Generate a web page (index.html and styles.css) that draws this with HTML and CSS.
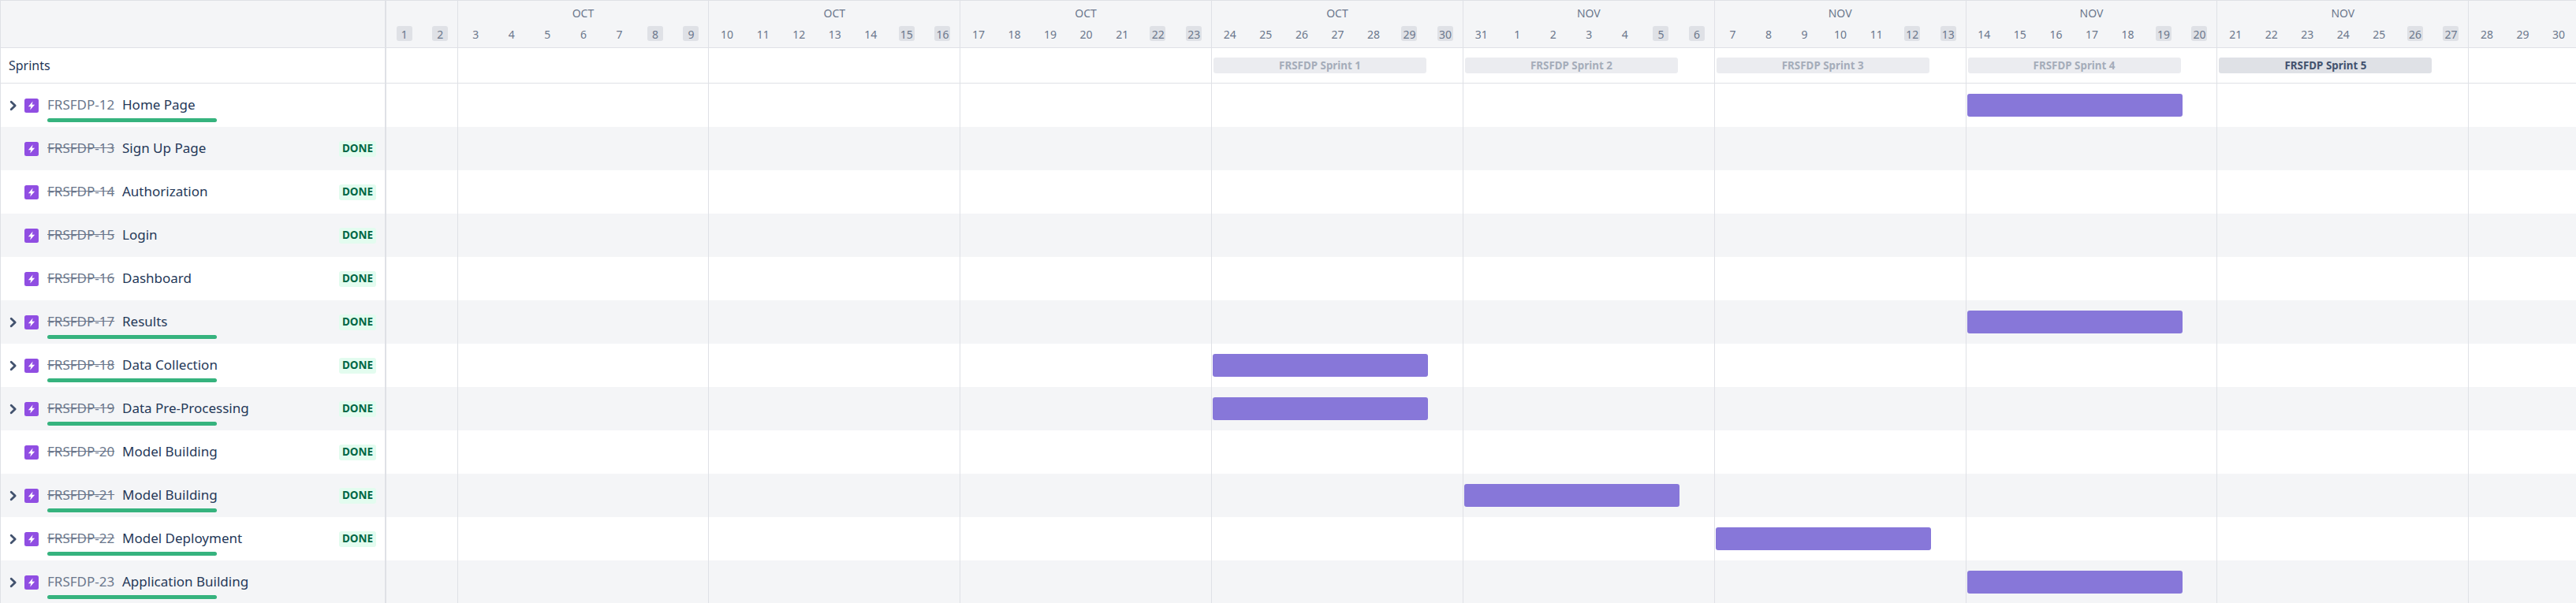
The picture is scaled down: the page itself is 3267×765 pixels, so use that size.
FILE: index.html
```html
<!DOCTYPE html>
<html lang="en">
<head>
<meta charset="utf-8">
<title>Roadmap</title>
<link rel="stylesheet" href="styles.css">
</head>
<body>
<svg class="defs" width="0" height="0" aria-hidden="true">
  <symbol id="epic" viewBox="0 0 18 18">
    <rect width="18" height="18" rx="2.5" fill="#904ee2"/>
    <path d="M10.6 3.4 4.9 10.2h3.3L7.2 14.6l5.9-6.9H9.6z" fill="#fff"/>
  </symbol>
  <symbol id="chev" viewBox="0 0 10 14">
    <path d="M2.2 2.2 7.2 7l-5 4.8" fill="none" stroke="#42526e" stroke-width="2.8" stroke-linecap="round" stroke-linejoin="round"/>
  </symbol>
</svg>
<main class="board">
  <header class="row head">
    <div class="side"></div>
    <div class="weeks">
      <div class="wk"><div class="mon"></div><div class="days"><span class="off">1</span><span class="off">2</span></div></div>
      <div class="wk"><div class="mon">OCT</div><div class="days"><span>3</span><span>4</span><span>5</span><span>6</span><span>7</span><span class="off">8</span><span class="off">9</span></div></div>
      <div class="wk"><div class="mon">OCT</div><div class="days"><span>10</span><span>11</span><span>12</span><span>13</span><span>14</span><span class="off">15</span><span class="off">16</span></div></div>
      <div class="wk"><div class="mon">OCT</div><div class="days"><span>17</span><span>18</span><span>19</span><span>20</span><span>21</span><span class="off">22</span><span class="off">23</span></div></div>
      <div class="wk"><div class="mon">OCT</div><div class="days"><span>24</span><span>25</span><span>26</span><span>27</span><span>28</span><span class="off">29</span><span class="off">30</span></div></div>
      <div class="wk"><div class="mon">NOV</div><div class="days"><span>31</span><span>1</span><span>2</span><span>3</span><span>4</span><span class="off">5</span><span class="off">6</span></div></div>
      <div class="wk"><div class="mon">NOV</div><div class="days"><span>7</span><span>8</span><span>9</span><span>10</span><span>11</span><span class="off">12</span><span class="off">13</span></div></div>
      <div class="wk"><div class="mon">NOV</div><div class="days"><span>14</span><span>15</span><span>16</span><span>17</span><span>18</span><span class="off">19</span><span class="off">20</span></div></div>
      <div class="wk"><div class="mon">NOV</div><div class="days"><span>21</span><span>22</span><span>23</span><span>24</span><span>25</span><span class="off">26</span><span class="off">27</span></div></div>
      <div class="wk"><div class="mon"></div><div class="days"><span>28</span><span>29</span><span>30</span></div></div>
    </div>
  </header>

  <section class="row sprints">
    <div class="side">Sprints</div>
    <div class="weeks">
      <div class="wk"></div><div class="wk"></div><div class="wk"></div><div class="wk"></div>
      <div class="wk"><div class="sprint">FRSFDP Sprint 1</div></div>
      <div class="wk"><div class="sprint">FRSFDP Sprint 2</div></div>
      <div class="wk"><div class="sprint">FRSFDP Sprint 3</div></div>
      <div class="wk"><div class="sprint">FRSFDP Sprint 4</div></div>
      <div class="wk"><div class="sprint active">FRSFDP Sprint 5</div></div>
      <div class="wk"></div>
    </div>
  </section>

  <section class="row item">
    <div class="side">
      <span class="tog"><svg class="chev"><use href="#chev"/></svg></span>
      <svg class="epic"><use href="#epic"/></svg>
      <div class="key"><span class="id">FRSFDP-12</span><span class="name">Home Page</span><i class="prog"></i></div>
    </div>
    <div class="weeks">
      <div class="wk"></div><div class="wk"></div><div class="wk"></div><div class="wk"></div><div class="wk"></div><div class="wk"></div><div class="wk"></div>
      <div class="wk"><div class="bar"></div></div>
      <div class="wk"></div><div class="wk"></div>
    </div>
  </section>

  <section class="row item">
    <div class="side">
      <span class="tog"></span>
      <svg class="epic"><use href="#epic"/></svg>
      <div class="key"><span class="id struck">FRSFDP-13</span><span class="name">Sign Up Page</span></div>
      <span class="done">DONE</span>
    </div>
    <div class="weeks">
      <div class="wk"></div><div class="wk"></div><div class="wk"></div><div class="wk"></div><div class="wk"></div><div class="wk"></div><div class="wk"></div><div class="wk"></div><div class="wk"></div><div class="wk"></div>
    </div>
  </section>

  <section class="row item">
    <div class="side">
      <span class="tog"></span>
      <svg class="epic"><use href="#epic"/></svg>
      <div class="key"><span class="id struck">FRSFDP-14</span><span class="name">Authorization</span></div>
      <span class="done">DONE</span>
    </div>
    <div class="weeks">
      <div class="wk"></div><div class="wk"></div><div class="wk"></div><div class="wk"></div><div class="wk"></div><div class="wk"></div><div class="wk"></div><div class="wk"></div><div class="wk"></div><div class="wk"></div>
    </div>
  </section>

  <section class="row item">
    <div class="side">
      <span class="tog"></span>
      <svg class="epic"><use href="#epic"/></svg>
      <div class="key"><span class="id struck">FRSFDP-15</span><span class="name">Login</span></div>
      <span class="done">DONE</span>
    </div>
    <div class="weeks">
      <div class="wk"></div><div class="wk"></div><div class="wk"></div><div class="wk"></div><div class="wk"></div><div class="wk"></div><div class="wk"></div><div class="wk"></div><div class="wk"></div><div class="wk"></div>
    </div>
  </section>

  <section class="row item">
    <div class="side">
      <span class="tog"></span>
      <svg class="epic"><use href="#epic"/></svg>
      <div class="key"><span class="id struck">FRSFDP-16</span><span class="name">Dashboard</span></div>
      <span class="done">DONE</span>
    </div>
    <div class="weeks">
      <div class="wk"></div><div class="wk"></div><div class="wk"></div><div class="wk"></div><div class="wk"></div><div class="wk"></div><div class="wk"></div><div class="wk"></div><div class="wk"></div><div class="wk"></div>
    </div>
  </section>

  <section class="row item">
    <div class="side">
      <span class="tog"><svg class="chev"><use href="#chev"/></svg></span>
      <svg class="epic"><use href="#epic"/></svg>
      <div class="key"><span class="id struck">FRSFDP-17</span><span class="name">Results</span><i class="prog"></i></div>
      <span class="done">DONE</span>
    </div>
    <div class="weeks">
      <div class="wk"></div><div class="wk"></div><div class="wk"></div><div class="wk"></div><div class="wk"></div><div class="wk"></div><div class="wk"></div>
      <div class="wk"><div class="bar"></div></div>
      <div class="wk"></div><div class="wk"></div>
    </div>
  </section>

  <section class="row item">
    <div class="side">
      <span class="tog"><svg class="chev"><use href="#chev"/></svg></span>
      <svg class="epic"><use href="#epic"/></svg>
      <div class="key"><span class="id struck">FRSFDP-18</span><span class="name">Data Collection</span><i class="prog"></i></div>
      <span class="done">DONE</span>
    </div>
    <div class="weeks">
      <div class="wk"></div><div class="wk"></div><div class="wk"></div><div class="wk"></div>
      <div class="wk"><div class="bar"></div></div>
      <div class="wk"></div><div class="wk"></div><div class="wk"></div><div class="wk"></div><div class="wk"></div>
    </div>
  </section>

  <section class="row item">
    <div class="side">
      <span class="tog"><svg class="chev"><use href="#chev"/></svg></span>
      <svg class="epic"><use href="#epic"/></svg>
      <div class="key"><span class="id struck">FRSFDP-19</span><span class="name">Data Pre-Processing</span><i class="prog"></i></div>
      <span class="done">DONE</span>
    </div>
    <div class="weeks">
      <div class="wk"></div><div class="wk"></div><div class="wk"></div><div class="wk"></div>
      <div class="wk"><div class="bar"></div></div>
      <div class="wk"></div><div class="wk"></div><div class="wk"></div><div class="wk"></div><div class="wk"></div>
    </div>
  </section>

  <section class="row item">
    <div class="side">
      <span class="tog"></span>
      <svg class="epic"><use href="#epic"/></svg>
      <div class="key"><span class="id struck">FRSFDP-20</span><span class="name">Model Building</span></div>
      <span class="done">DONE</span>
    </div>
    <div class="weeks">
      <div class="wk"></div><div class="wk"></div><div class="wk"></div><div class="wk"></div><div class="wk"></div><div class="wk"></div><div class="wk"></div><div class="wk"></div><div class="wk"></div><div class="wk"></div>
    </div>
  </section>

  <section class="row item">
    <div class="side">
      <span class="tog"><svg class="chev"><use href="#chev"/></svg></span>
      <svg class="epic"><use href="#epic"/></svg>
      <div class="key"><span class="id struck">FRSFDP-21</span><span class="name">Model Building</span><i class="prog"></i></div>
      <span class="done">DONE</span>
    </div>
    <div class="weeks">
      <div class="wk"></div><div class="wk"></div><div class="wk"></div><div class="wk"></div><div class="wk"></div>
      <div class="wk"><div class="bar"></div></div>
      <div class="wk"></div><div class="wk"></div><div class="wk"></div><div class="wk"></div>
    </div>
  </section>

  <section class="row item">
    <div class="side">
      <span class="tog"><svg class="chev"><use href="#chev"/></svg></span>
      <svg class="epic"><use href="#epic"/></svg>
      <div class="key"><span class="id struck">FRSFDP-22</span><span class="name">Model Deployment</span><i class="prog"></i></div>
      <span class="done">DONE</span>
    </div>
    <div class="weeks">
      <div class="wk"></div><div class="wk"></div><div class="wk"></div><div class="wk"></div><div class="wk"></div><div class="wk"></div>
      <div class="wk"><div class="bar"></div></div>
      <div class="wk"></div><div class="wk"></div><div class="wk"></div>
    </div>
  </section>

  <section class="row item">
    <div class="side">
      <span class="tog"><svg class="chev"><use href="#chev"/></svg></span>
      <svg class="epic"><use href="#epic"/></svg>
      <div class="key"><span class="id">FRSFDP-23</span><span class="name">Application Building</span><i class="prog"></i></div>
    </div>
    <div class="weeks">
      <div class="wk"></div><div class="wk"></div><div class="wk"></div><div class="wk"></div><div class="wk"></div><div class="wk"></div><div class="wk"></div>
      <div class="wk"><div class="bar"></div></div>
      <div class="wk"></div><div class="wk"></div>
    </div>
  </section>
</main>
</body>
</html>
```
FILE: styles.css
```css
* { box-sizing: border-box; }
html, body { margin: 0; height: 765px; overflow: hidden; background: #fff; }
body { font-family: "Noto Sans", "Open Sans", sans-serif; color: #172b4d; }
.defs { display: block; height: 0; }
.board { width: 3267px; border-top: 1px solid #dfe1e6; border-left: 1px solid #dfe1e6; }

.row { display: flex; }
.side {
  flex: 0 0 489px;
  display: flex;
  align-items: center;
  border-right: 2px solid #dfe1e6;
}
.weeks {
  flex: 1;
  min-width: 0;
  display: grid;
  grid-template-columns: 90.5px repeat(8, 318.85px) 1fr;
}
.wk { border-right: 1px solid #dfe1e6; min-width: 0; }
.wk:last-child { border-right: 0; }

.head { height: 60px; background: #f4f5f7; border-bottom: 1px solid #dfe1e6; }
.mon { height: 32px; padding-top: 4px; text-align: center; font-size: 14px; line-height: 24px; color: #6b778c; }
.days { display: flex; }
.days span {
  flex: 0 0 45.55px;
  height: 20px;
  display: flex;
  align-items: center;
  justify-content: center;
  font-size: 14px;
  color: #6b778c;
}
.days .off { position: relative; z-index: 0; }
.days .off::before {
  content: "";
  position: absolute;
  z-index: -1;
  left: 12.5px;
  width: 20px;
  top: 0;
  height: 19px;
  border-radius: 3px;
  background: #dfe1e6;
}

.sprints { height: 45px; border-bottom: 1px solid #dfe1e6; }
.sprints .side { padding-left: 10px; font-size: 16px; color: #253858; }
.sprints .wk { padding: 12px 0 0 2px; }
.sprint {
  width: 270px;
  height: 20px;
  border-radius: 3px;
  background: #ebecf0;
  color: #a5adba;
  font-size: 13.4px;
  font-weight: 700;
  line-height: 20px;
  text-align: center;
}
.sprint.active { background: #dfe1e6; color: #42526e; }

.item { height: 55px; }
.item:nth-child(even) { background: #f4f5f7; }
.tog { flex: 0 0 30px; display: flex; justify-content: center; padding-left: 1px; }
.chev { width: 10px; height: 14px; display: block; }
.epic { flex: 0 0 18px; width: 18px; height: 18px; display: block; }
.key { position: relative; flex: 1; display: flex; align-items: center; margin-left: 11px; padding-bottom: 2px; white-space: nowrap; font-size: 17px; line-height: 25px; }
.id { width: 95px; color: #6b778c; }
.id.struck { text-decoration: line-through; }
.name { color: #253858; }
.prog {
  position: absolute;
  left: 0;
  top: 30px;
  width: 215px;
  height: 5px;
  border-radius: 3px;
  background: #36b37e;
}
.done {
  flex: 0 0 47px;
  height: 20px;
  margin-right: 11px;
  border-radius: 3px;
  background: #e3fcef;
  color: #006644;
  font-size: 13.5px;
  font-weight: 700;
  line-height: 19px;
  text-align: center;
}
.item .wk { padding: 13px 0 0 1px; }
.bar { width: 273px; height: 29px; border-radius: 3px; background: #8777d9; }
```
